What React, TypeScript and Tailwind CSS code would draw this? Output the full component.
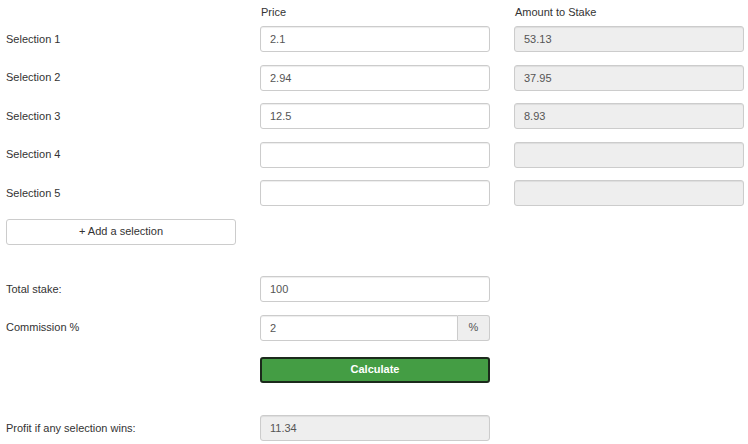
import React from 'react'

const font = { fontFamily: '"Liberation Sans", Arial, sans-serif' }

const inputBase =
  'h-[26px] w-full rounded-[3px] border border-[#ccc] px-[9px] text-[11px] text-[#555] shadow-[inset_0_1px_1px_rgba(0,0,0,0.075)] outline-none'

const selections = [
  { price: '2.1', stake: '53.13' },
  { price: '2.94', stake: '37.95' },
  { price: '12.5', stake: '8.93' },
  { price: '', stake: '' },
  { price: '', stake: '' },
]

const Row: React.FC<{ className?: string; children: React.ReactNode }> = ({
  className = '',
  children,
}) => (
  <div className={`grid h-[26px] grid-cols-[230px_230px_230px] gap-x-6 items-center ${className}`}>
    {children}
  </div>
)

export default function App() {
  return (
    <div className="min-h-[444px] w-[748px] bg-white pl-[6px] text-[11px] text-[#333]" style={font}>
      <div className="grid h-[26px] grid-cols-[230px_230px_230px] gap-x-6 pt-[5px] leading-[14px]">
        <div />
        <div className="pl-[1px]">Price</div>
        <div className="pl-[1px]">Amount to Stake</div>
      </div>

      {selections.map((s, i) => (
        <Row key={i} className="mb-[12.5px]">
          <div>Selection {i + 1}</div>
          <input className={`${inputBase} bg-white`} defaultValue={s.price} />
          <input className={`${inputBase} bg-[#eee]`} defaultValue={s.stake} readOnly />
        </Row>
      ))}

      <Row>
        <button className="h-[26px] w-full rounded-[3px] border border-[#ccc] bg-white text-[11px] text-[#333]">
          + Add a selection
        </button>
      </Row>

      <Row className="mt-[31.5px]">
        <div>Total stake:</div>
        <input className={`${inputBase} bg-white`} defaultValue="100" />
      </Row>

      <Row className="mt-[12.5px]">
        <div>Commission %</div>
        <div className="flex h-[26px] w-full">
          <input
            className={`${inputBase} rounded-r-none bg-white`}
            defaultValue="2"
          />
          <span className="flex h-[26px] w-[32px] shrink-0 items-center justify-center rounded-r-[3px] border border-l-0 border-[#ccc] bg-[#eee] text-[11px] text-[#555]">
            %
          </span>
        </div>
      </Row>

      <Row className="mt-[16px]">
        <div />
        <button className="h-[26px] w-full rounded-[3px] border-2 border-[#1c2a1c] bg-[#449d44] text-[11px] font-bold text-white">
          Calculate
        </button>
      </Row>

      <Row className="mt-[32.5px]">
        <div>Profit if any selection wins:</div>
        <input className={`${inputBase} bg-[#eee]`} defaultValue="11.34" readOnly />
      </Row>
    </div>
  )
}
